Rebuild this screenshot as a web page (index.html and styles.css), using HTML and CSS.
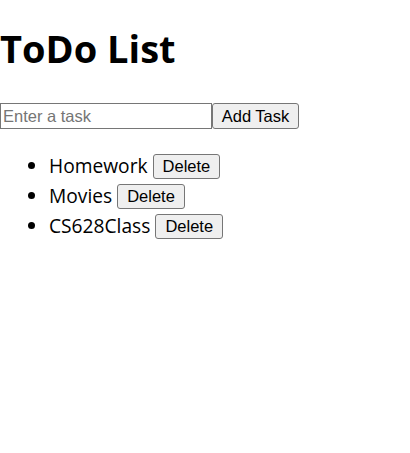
FILE: index.html
```html
<!DOCTYPE html>
<html lang="en">
<head>
<meta charset="utf-8">
<title>ToDo List</title>
<link rel="stylesheet" href="styles.css">
</head>
<body>
<h1 class="title">ToDo List</h1>
<div class="add-row">
  <input class="task-input" type="text" placeholder="Enter a task"><button class="btn add-btn">Add Task</button>
</div>
<ul class="task-list">
  <li class="task"><span class="task-name">Homework</span><button class="btn del-btn">Delete</button></li>
  <li class="task"><span class="task-name">Movies</span><button class="btn del-btn">Delete</button></li>
  <li class="task"><span class="task-name">CS628Class</span><button class="btn del-btn">Delete</button></li>
</ul>
</body>
</html>
```

FILE: styles.css
```css
html, body {
  margin: 0;
  padding: 0;
  background: #ffffff;
}

body {
  font-family: "Open Sans", "Noto Sans", sans-serif;
  color: #000000;
}

.title {
  font-size: 38px;
  font-weight: 700;
  line-height: 54px;
  margin: 21px 0 28px 0;
}

.add-row {
  display: flex;
  align-items: stretch;
  height: 26px;
}

.task-input {
  box-sizing: border-box;
  width: 212px;
  height: 26px;
  margin: 0;
  padding: 1px 2px;
  border: 1px solid #767676;
  border-radius: 0;
  font-family: "Liberation Sans", Arial, sans-serif;
  font-size: 16.5px;
  color: #000;
}

.task-input::placeholder {
  color: #757575;
}

.btn {
  box-sizing: border-box;
  margin: 0;
  background: #efefef;
  border: 1px solid #767676;
  border-radius: 3px;
  font-family: "Liberation Sans", Arial, sans-serif;
  font-size: 16.5px;
  color: #000;
  cursor: pointer;
}

.add-btn {
  width: 87px;
  height: 26px;
  padding: 0 8px;
}

.task-list {
  margin: 22px 0 0 0;
  padding-left: 49px;
  font-size: 19.2px;
}

.task {
  height: 30px;
  line-height: 30px;
}

.task-name {
  margin-right: 5px;
}

.del-btn {
  height: 25px;
  padding: 0 9px;
  vertical-align: 1px;
}
```
